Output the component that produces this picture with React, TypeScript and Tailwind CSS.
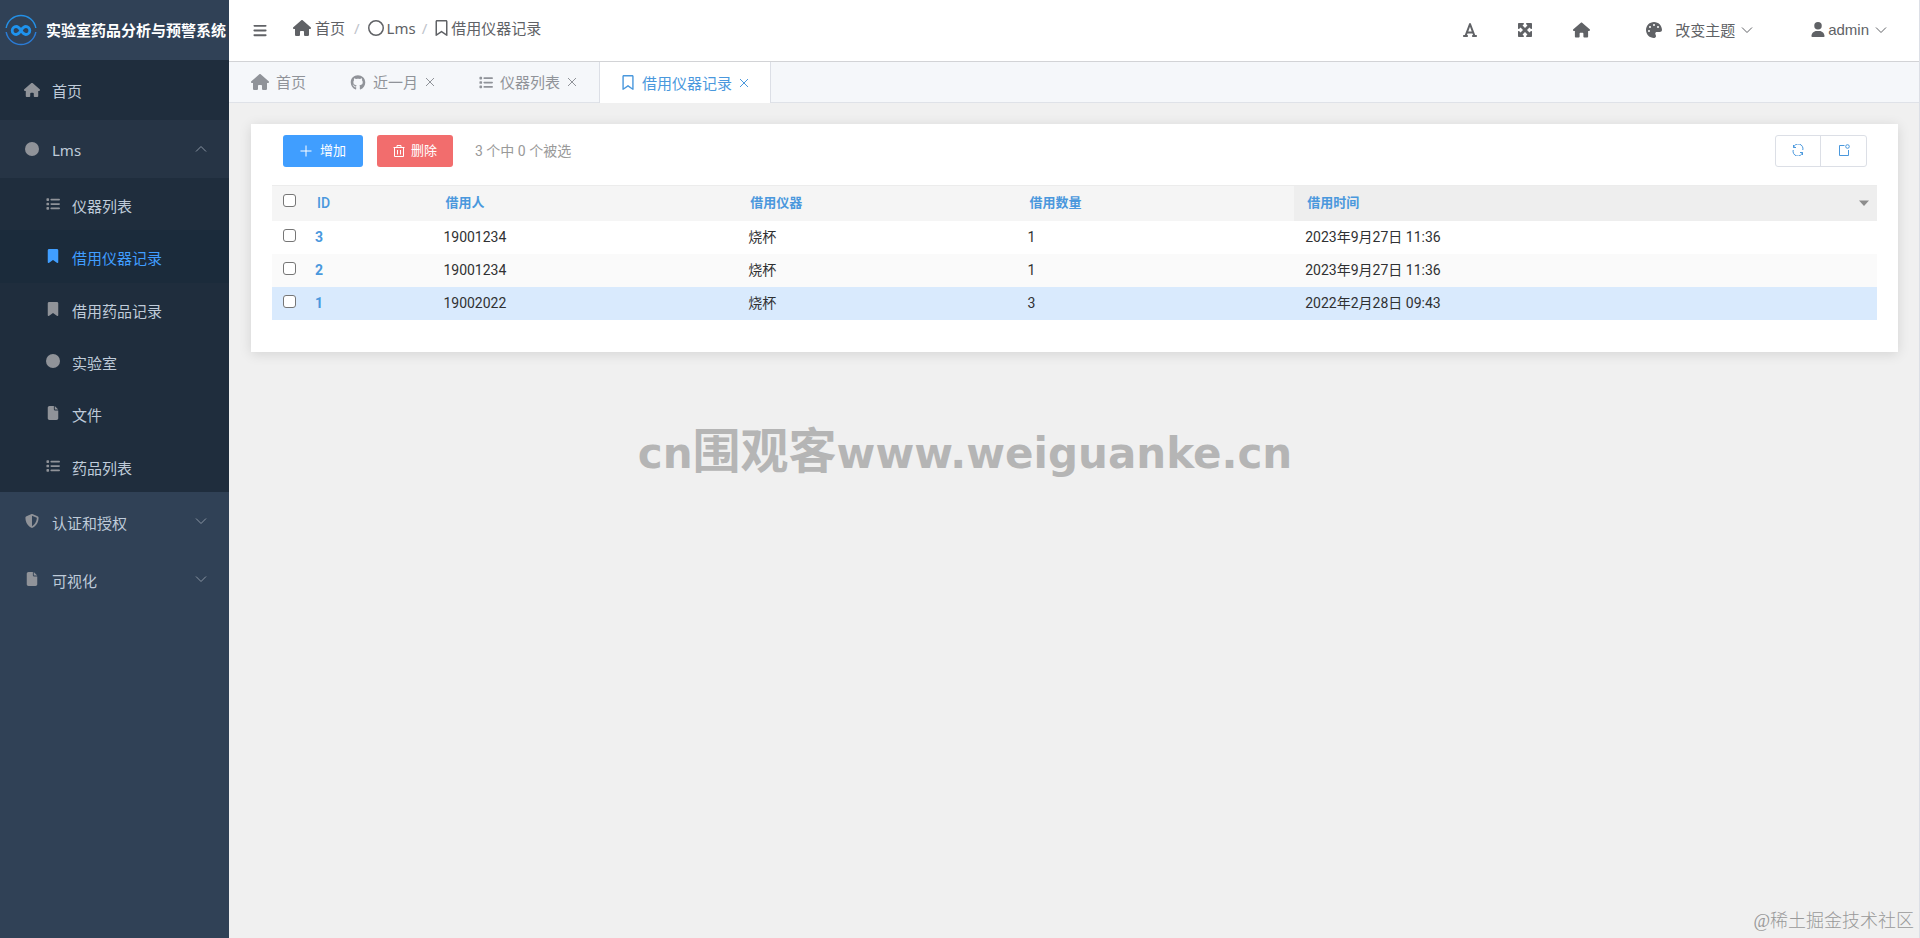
import type { ReactNode } from "react";
import {
  FaBars,
  FaBookmark,
  FaCircle,
  FaFile,
  FaFont,
  FaGithub,
  FaHouse,
  FaList,
  FaMaximize,
  FaPalette,
  FaRegBookmark,
  FaRegCircle,
  FaShieldHalved,
  FaUser,
} from "react-icons/fa6";

function Chevron({ up = false, className = "" }: { up?: boolean; className?: string }) {
  return (
    <svg viewBox="0 0 12 12" className={`h-3 w-3 shrink-0 ${className}`} fill="none" stroke="currentColor" aria-hidden="true">
      <path d={up ? "M1 8.5 6 3.5l5 5" : "M1 3.5l5 5 5-5"} />
    </svg>
  );
}

function Logo() {
  return (
    <svg viewBox="0 0 32 32" className="h-8 w-8 shrink-0" fill="none" aria-hidden="true">
      <path d="M1.200 14A15 15 0 0 1 30.800 14" stroke="#2490e6" strokeWidth="1.5" />
      <path d="M1.200 18A15 15 0 0 0 30.800 18" stroke="#2b7cd6" strokeWidth="1.5" />
      <path
        d="M16 16.500c-2-3.200-3.300-4-4.800-4a4 4 0 0 0 0 8c1.500 0 2.800-.8 4.800-4s3.300-4 4.800-4a4 4 0 0 1 0 8c-1.500 0-2.800-.8-4.800-4Z"
        stroke="#1e93ee"
        strokeWidth="2.800"
      />
    </svg>
  );
}

function CloseIcon() {
  return (
    <svg viewBox="0 0 10 10" className="h-[10px] w-[10px]" fill="none" stroke="currentColor" aria-hidden="true">
      <path d="m1 1 8 8M9 1 1 9" />
    </svg>
  );
}

const subItems = [
  { label: "仪器列表", icon: <FaList /> },
  { label: "借用仪器记录", icon: <FaBookmark />, active: true },
  { label: "借用药品记录", icon: <FaBookmark /> },
  { label: "实验室", icon: <FaCircle /> },
  { label: "文件", icon: <FaFile /> },
  { label: "药品列表", icon: <FaList /> },
];

const groupClass = "flex h-[58px] w-full items-center pr-[22px] pl-6 text-left";

function Sidebar() {
  return (
    <aside className="w-[229px] shrink-0 bg-[#304156] text-[15px] leading-5 text-[#bfcbd9]">
      <div className="flex h-15 items-center gap-[9px] pl-[5px]">
        <Logo />
        <h1 className="font-bold whitespace-nowrap text-white">实验室药品分析与预警系统</h1>
      </div>
      <nav>
        <a href="#home" className="flex h-15 items-center gap-3 bg-[#1f2d3d] px-6">
          <FaHouse className="h-4 w-4 text-[#909399]" />
          <span className="pt-0.5">首页</span>
        </a>
        <button className={`${groupClass} bg-[#263445]`} aria-expanded="true">
          <FaCircle className="mr-3 h-[14px] w-4 text-[#909399]" />
          <span className="flex-1 pt-0.5">Lms</span>
          <Chevron up className="text-[#8a95a3]" />
        </button>
        <ul className="grid h-[314px] auto-rows-fr bg-[#1f2d3d]">
          {subItems.map((item) => (
            <li key={item.label}>
              <a
                href={`#${item.label}`}
                className={`flex h-full items-center gap-3 pl-[46px] ${item.active ? "bg-[#1b2b3b] text-[#409eff]" : ""}`}
              >
                <span className={`flex w-[14px] justify-center text-[14px] ${item.active ? "" : "text-[#909399]"}`}>
                  {item.icon}
                </span>
                <span className="pt-1">{item.label}</span>
              </a>
            </li>
          ))}
        </ul>
        <button className={groupClass} aria-expanded="false">
          <FaShieldHalved className="mr-3 h-[14px] w-4 text-[#909399]" />
          <span className="flex-1 pt-1">认证和授权</span>
          <Chevron className="text-[#8a95a3]" />
        </button>
        <button className={groupClass} aria-expanded="false">
          <FaFile className="mr-3 h-[14px] w-4 text-[#909399]" />
          <span className="flex-1 pt-1">可视化</span>
          <Chevron className="text-[#8a95a3]" />
        </button>
      </nav>
    </aside>
  );
}

function Header() {
  return (
    <header className="flex h-[62px] items-center justify-between border-b border-[#d2d3d6] bg-white pr-8 pl-6 text-[15px] leading-5 text-[#606266]">
      <div className="flex items-center">
        <button aria-label="折叠菜单" className="mr-[26px]">
          <FaBars className="h-[15px] w-[14px]" />
        </button>
        <nav aria-label="面包屑" className="flex items-center pb-1.5">
          <a href="#home" className="flex items-center gap-1">
            <FaHouse className="h-4 w-[18px]" />
            首页
          </a>
          <span className="mr-2 ml-[9px] text-[#c0c4cc]">/</span>
          <a href="#lms" className="flex items-center gap-[3px]">
            <FaRegCircle className="h-4 w-4" />
            Lms
          </a>
          <span className="mr-2 ml-1.5 text-[#c0c4cc]">/</span>
          <span className="flex items-center gap-[3px]">
            <FaRegBookmark className="h-4 w-[13px]" />
            借用仪器记录
          </span>
        </nav>
      </div>
      <div className="flex items-center pb-0.5">
        <button aria-label="字体大小" className="mr-10">
          <FaFont className="h-4 w-[14px]" />
        </button>
        <button aria-label="全屏" className="mr-10">
          <FaMaximize className="h-4 w-4" />
        </button>
        <button aria-label="主页" className="mr-14">
          <FaHouse className="h-4 w-[17px]" />
        </button>
        <button className="mr-[58px] flex items-center">
          <FaPalette className="mr-[13px] h-4 w-4" />
          改变主题
          <Chevron className="ml-1.5" />
        </button>
        <button className="flex items-center font-['Liberation_Sans',sans-serif]">
          <FaUser className="mr-[3px] h-[15px] w-[14px]" />
          admin
          <Chevron className="ml-1.5" />
        </button>
      </div>
    </header>
  );
}

function Tab({ icon, label, closable = true, active = false }: { icon: ReactNode; label: string; closable?: boolean; active?: boolean }) {
  return (
    <div
      className={`flex items-center gap-[7px] border-x px-[21px] ${
        active ? "-mb-px border-[#dcdfe6] bg-white text-[#4a98dd]" : "border-transparent"
      }`}
    >
      <button role="tab" aria-selected={active} className="flex items-center gap-[7px] whitespace-nowrap">
        {icon}
        {label}
      </button>
      {closable && (
        <button aria-label={`关闭 ${label}`}>
          <CloseIcon />
        </button>
      )}
    </div>
  );
}

function Tabs() {
  return (
    <div
      role="tablist"
      className="flex h-[41px] border-b border-[#dfe2e8] bg-[#f5f7fa] text-[15px] leading-5 text-[#909399]"
    >
      <Tab icon={<FaHouse className="h-4 w-[18px]" />} label="首页" closable={false} />
      <Tab icon={<FaGithub className="h-[15px] w-4" />} label="近一月" />
      <Tab icon={<FaList className="h-[15px] w-[14px]" />} label="仪器列表" />
      <Tab icon={<FaRegBookmark className="h-[15px] w-[14px]" />} label="借用仪器记录" active />
    </div>
  );
}

const rows = [
  { id: 3, user: "19001234", item: "烧杯", count: 1, time: "2023年9月27日 11:36", row: "bg-white" },
  { id: 2, user: "19001234", item: "烧杯", count: 1, time: "2023年9月27日 11:36", row: "bg-[#fafafa]" },
  { id: 1, user: "19002022", item: "烧杯", count: 3, time: "2022年2月28日 09:43", row: "bg-[#d9eafd]" },
];

function Checkbox({ label }: { label: string }) {
  return (
    <input
      type="checkbox"
      aria-label={label}
      className="mb-[3px] block h-[13px] w-[13px] appearance-none rounded-[3px] border border-[#767676] bg-white checked:bg-[#409eff]"
    />
  );
}

function RecordTable() {
  const th = "pl-[13px] text-left text-[13px] font-bold";
  return (
    <table className="w-full table-fixed border-collapse text-[14px] leading-5 text-[#303133]">
      <colgroup>
        <col className="w-8" />
        <col className="w-[8%]" />
        <col className="w-[19%]" />
        <col className="w-[17.4%]" />
        <col className="w-[17.3%]" />
        <col />
      </colgroup>
      <thead>
        <tr className="h-[35px] border-t border-[#ececec] bg-[#f5f5f5] text-[#4a98dd]">
          <th className="pb-0.5 pl-[11px]">
            <Checkbox label="全选" />
          </th>
          <th className="pl-[13px] text-left text-[14px] font-medium">
            <a href="#id">ID</a>
          </th>
          <th className={th}>
            <a href="#user">借用人</a>
          </th>
          <th className={th}>
            <a href="#item">借用仪器</a>
          </th>
          <th className={th}>
            <a href="#count">借用数量</a>
          </th>
          <th className={`${th} bg-[#eeeeee]`}>
            <div className="flex items-center justify-between pr-2">
              <a href="#time">借用时间</a>
              <button aria-label="排序">
                <svg viewBox="0 0 10 6" className="h-1.5 w-[10px]" fill="#8c8c8c" aria-hidden="true">
                  <path d="M0 .5h10L5 6Z" />
                </svg>
              </button>
            </div>
          </th>
        </tr>
      </thead>
      <tbody>
        {rows.map((r) => (
          <tr key={r.id} className={`h-[33px] ${r.row}`}>
            <td className="pl-[11px]">
              <Checkbox label={`选择 ${r.id}`} />
            </td>
            <td className="pl-[11px] font-bold text-[#4a98dd]">
              <a href={`#record-${r.id}`}>{r.id}</a>
            </td>
            <td className="pl-[11px]">{r.user}</td>
            <td className="pl-[11px]">{r.item}</td>
            <td className="pl-[11px]">{r.count}</td>
            <td className="pl-[11px]">{r.time}</td>
          </tr>
        ))}
      </tbody>
    </table>
  );
}

function Toolbar() {
  return (
    <div className="mb-[18px] flex h-8 items-center pr-[10px] pl-[11px] text-[14px] leading-5">
      <button className="flex h-8 w-20 items-center justify-center gap-2 rounded-[3px] bg-[#409eff] text-[13px] text-white">
        <svg viewBox="0 0 12 12" className="h-3 w-3" stroke="currentColor" fill="none" aria-hidden="true">
          <path d="M0.500 6h11M6 .5v11" />
        </svg>
        增加
      </button>
      <button className="ml-[14px] flex h-8 w-[76px] items-center justify-center gap-1.5 rounded-[3px] bg-[#f26d6d] text-[13px] text-white">
        <svg viewBox="0 0 12 12" className="h-3 w-3" stroke="currentColor" fill="none" aria-hidden="true">
          <path d="M.5 2.500h11M4 2.500v-2h4v2M1.500 2.500v9h9v-9M4.500 5v4.500M7.500 5v4.500" />
        </svg>
        删除
      </button>
      <span className="ml-[22px] text-[#999999]">3 个中 0 个被选</span>
      <div className="ml-auto flex h-8 rounded-[3px] border border-[#dcdfe6] text-[#4a98dd]">
        <button aria-label="刷新" className="flex w-[45px] items-center justify-center border-r border-[#dcdfe6] pb-0.5">
          <svg viewBox="0 0 12 12" className="h-3 w-3" stroke="currentColor" fill="none" aria-hidden="true">
            <path d="M1.500 1v2.500H4M1.500 3.500A4.800 4.800 0 0 1 10.800 6M10.500 11V8.500H8M10.500 8.500A4.800 4.800 0 0 1 1.200 6" />
          </svg>
        </button>
        <button aria-label="新窗口打开" className="flex w-[45px] items-center justify-center pb-0.5">
          <svg viewBox="0 0 12 12" className="h-3 w-3" stroke="currentColor" fill="none" aria-hidden="true">
            <path d="M6.500 1.500h-5v10h9V6" />
            <circle cx="9.500" cy="2.500" r="1.800" />
          </svg>
        </button>
      </div>
    </div>
  );
}

export default function App() {
  return (
    <div className="relative flex min-h-screen bg-[#f0f0f0] font-['Noto_Sans','Noto_Sans_CJK_SC',sans-serif]">
      <Sidebar />
      <div className="flex min-w-0 flex-1 flex-col border-r border-[#dcdfe6]">
        <Header />
        <Tabs />
        <main className="pt-[21px] pr-[21px] pl-[22px]">
          <section className="bg-white px-[21px] pt-[11px] pb-8 font-[Roboto,'Noto_Sans_CJK_SC',sans-serif] shadow-[0_2px_12px_rgba(0,0,0,0.12)]">
            <Toolbar />
            <RecordTable />
          </section>
        </main>
      </div>
      <div className="pointer-events-none absolute inset-x-0 top-[416px] flex items-baseline justify-center pl-[10px] font-['DejaVu_Sans','Noto_Sans_CJK_SC',sans-serif] text-[42px] leading-[70px] font-bold text-[#b5b5b5]">
        <span>cn</span>
        <span className="text-[48px]">围观客</span>
        <span>www.weiguanke.cn</span>
      </div>
      <div className="pointer-events-none absolute right-[6px] bottom-[3px] font-['Liberation_Serif','Noto_Sans_CJK_SC',serif] text-[18px] leading-7 font-light text-[#999999]">
        @稀土掘金技术社区
      </div>
    </div>
  );
}
